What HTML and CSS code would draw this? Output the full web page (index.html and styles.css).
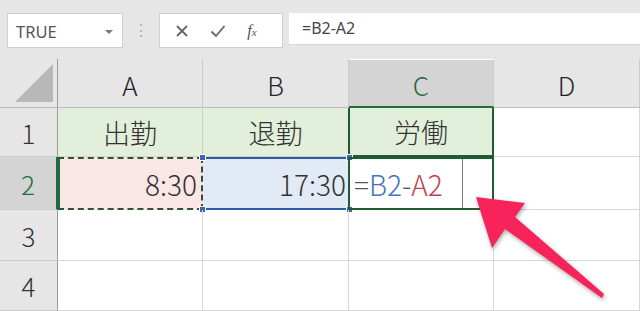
FILE: index.html
```html
<!DOCTYPE html>
<html lang="ja">
<head>
    <meta charset="UTF-8">
    <meta name="viewport" content="width=device-width, initial-scale=1.0">
    <title>Excel</title>
    <link rel="stylesheet" href="styles.css">
</head>
<body>
    <div id="toolbar">
        <div class="name-box">
            <span>TRUE</span>
            <span class="drop"></span>
        </div>
        <div class="grip">⋮</div>
        <div class="fx-buttons">
            <svg class="btn" width="14" height="14" viewBox="0 0 14 14"><path d="M2 2 L12 12 M12 2 L2 12" /></svg>
            <svg class="btn" width="16" height="14" viewBox="0 0 16 14"><path d="M1.5 7.5 L6 12 L14.5 2" /></svg>
            <span class="btn fx"><i>f</i><small>x</small></span>
        </div>
        <div class="formula">=B2-A2</div>
    </div>

    <div id="sheet">
        <div class="corner"><span></span></div>
        <div class="col-head">A</div>
        <div class="col-head">B</div>
        <div class="col-head active">C</div>
        <div class="col-head">D</div>

        <div class="row-head">1</div>
        <div class="cell title">出勤</div>
        <div class="cell title">退勤</div>
        <div class="cell title sel-col">労働</div>
        <div class="cell"></div>

        <div class="row-head active">2</div>
        <div class="cell num ref-a">8:30</div>
        <div class="cell num ref-b">17:30
            <span class="handle tl"></span><span class="handle bl"></span>
            <span class="handle tr"></span><span class="handle br"></span>
        </div>
        <div class="cell edit"><span class="op">=</span><span class="b">B2</span><span class="op">-</span><span class="a">A2</span><span class="caret"></span></div>
        <div class="cell"></div>

        <div class="row-head">3</div>
        <div class="cell"></div>
        <div class="cell"></div>
        <div class="cell"></div>
        <div class="cell"></div>

        <div class="row-head">4</div>
        <div class="cell"></div>
        <div class="cell"></div>
        <div class="cell"></div>
        <div class="cell"></div>
    </div>

    <svg class="arrow" width="640" height="311" viewBox="0 0 640 311">
        <polygon points="476,197 525,203 515,217 604,294 602,298 505,229 492,248" />
    </svg>
</body>
</html>
```

FILE: styles.css
```css
body {
    margin: 0;
    width: 640px;
    height: 311px;
    overflow: hidden;
    background: #e6e6e6;
    font-family: "Noto Sans CJK JP", sans-serif;
    font-weight: 300;
    position: relative;
}
#toolbar {
    height: 59px;
    box-sizing: border-box;
    padding: 13px 0 0 7px;
    display: flex;
    align-items: flex-start;
    background: #e6e6e6;
    font-family: "Noto Sans", sans-serif;
    font-weight: 400;
}
.name-box {
    width: 116px;
    height: 35px;
    box-sizing: border-box;
    background: #fff;
    border: 1px solid #cfcfcf;
    display: flex;
    align-items: center;
    justify-content: space-between;
    padding: 2px 9px 0 8px;
    font-size: 16.5px;
    color: #555;
}
.drop {
    width: 0;
    height: 0;
    border-left: 4px solid transparent;
    border-right: 4px solid transparent;
    border-top: 4px solid #777;
}
.grip {
    width: 36px;
    text-align: center;
    color: #b0b0b0;
    font-size: 16px;
    line-height: 35px;
}
.fx-buttons {
    width: 124px;
    height: 35px;
    box-sizing: border-box;
    background: #fff;
    border: 1px solid #cfcfcf;
    display: flex;
    align-items: center;
    justify-content: space-around;
    padding: 0 4px;
    color: #666;
}
.btn path {
    fill: none;
    stroke: #666;
    stroke-width: 1.8;
}
.fx {
    width: 20px;
    font-family: "Liberation Serif", serif;
    font-size: 16px;
    color: #555;
}
.fx small {
    font-style: italic;
    font-size: 11px;
}
.formula {
    margin-left: 6px;
    flex: 1;
    height: 32px;
    box-sizing: border-box;
    background: #fff;
    border-bottom: 1px solid #d8d8d8;
    padding: 0 0 0 13px;
    font-size: 16px;
    line-height: 31px;
    color: #444;
}
#sheet {
    display: grid;
    grid-template-columns: 58px 145px 146px 145px 1fr;
    grid-template-rows: 49px 49px 53px 51px 50px;
    background: #fff;
}
.corner {
    background: #e6e6e6;
    border-right: 1px solid #9a9a9a;
    border-bottom: 1px solid #bdbdbd;
    position: relative;
}
.corner span {
    display: block;
    position: absolute;
    left: 15px;
    top: 5px;
    width: 38px;
    height: 38px;
    background: #b8b8b8;
    clip-path: polygon(100% 0, 100% 100%, 0 100%);
}
.col-head {
    background: #e6e6e6;
    border-right: 1px solid #cbcbcb;
    border-bottom: 1px solid #bdbdbd;
    display: flex;
    align-items: center;
    justify-content: center;
    padding-top: 2px;
    font-size: 26px;
    color: #262626;
}
.col-head.active {
    background: #d4d4d4;
    color: #1f6b3b;
    border-bottom: 2px solid #1f6b3b;
    margin-top: 1px;
}
.row-head {
    background: #e6e6e6;
    border-right: 1px solid #9a9a9a;
    border-bottom: 1px solid #cbcbcb;
    display: flex;
    align-items: center;
    justify-content: center;
    font-size: 26px;
    color: #333;
}
.row-head.active {
    background: #d4d4d4;
    color: #1f6b3b;
    border-right: 2px solid #1f6b3b;
}
.cell {
    border-right: 1px solid #d6d6d6;
    border-bottom: 1px solid #d6d6d6;
    display: flex;
    align-items: center;
    font-size: 28px;
    color: #333;
    position: relative;
    box-sizing: border-box;
}
.title {
    background: #e2efda;
    justify-content: center;
    font-size: 27px;
    border-right-color: #c6d6bc;
    border-bottom-color: #c6d6bc;
}
.sel-col {
    border-left: 2px solid #1f5c36;
    border-right: 2px solid #1f5c36;
    border-bottom: 2px solid #1f5c36;
    margin-left: -1px;
}
.num {
    justify-content: flex-end;
    padding-right: 3px;
}
.ref-a {
    background: #fbe6e6;
    border: 2px dashed #2d5234;
    border-left: 2px solid #1f6b3b;
    padding-right: 4px;
}
.ref-b {
    background: #e2eaf6;
    border-top: 2px solid #2f59a6;
    border-bottom: 2px solid #2f59a6;
    border-right: none;
}
.handle {
    position: absolute;
    width: 5px;
    height: 5px;
    background: #3b67b8;
    border: 1px solid #fff;
}
.handle.tl { left: -4px; top: -5px; }
.handle.bl { left: -4px; bottom: -5px; }
.handle.tr { right: -4px; top: -5px; }
.handle.br { right: -4px; bottom: -5px; }
.edit {
    border: 2px solid #1f5c36;
    padding-left: 4px;
    margin-left: -1px;
}
.edit .op { color: #555; }
.edit .b { color: #4471c1; }
.edit .a { color: #c2414f; }
.caret {
    position: absolute;
    left: 112px;
    top: 0;
    bottom: 0;
    width: 1px;
    background: #777;
}
.arrow {
    position: absolute;
    left: 0;
    top: 0;
    pointer-events: none;
}
.arrow polygon {
    fill: #f7235a;
    filter: drop-shadow(1px 2px 2px rgba(0, 0, 0, 0.35));
}
```
